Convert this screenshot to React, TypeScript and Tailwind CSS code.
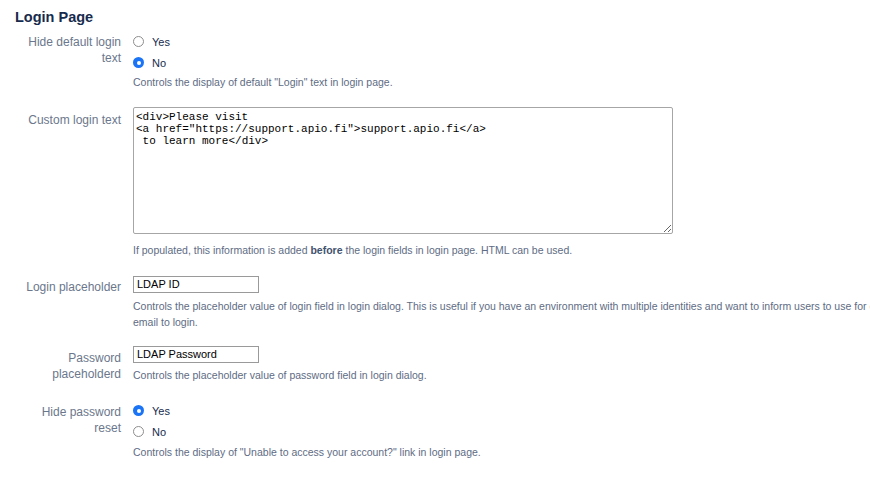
import React from "react";

const font = { fontFamily: '"Liberation Sans", Arial, sans-serif' };

function Radio({ checked, label }: { checked: boolean; label: string }) {
  return (
    <div className="flex h-[21px] items-center">
      {checked ? (
        <span className="flex h-[11px] w-[11px] items-center justify-center rounded-full bg-[#1b74f5]">
          <span className="h-[4px] w-[4px] rounded-full bg-white" />
        </span>
      ) : (
        <span className="h-[11px] w-[11px] rounded-full border border-[#8d8d8d] bg-white" />
      )}
      <span className="ml-[8px] text-[11px] leading-[16px] text-[#172b4d]">{label}</span>
    </div>
  );
}

function Label({ lines, pt }: { lines: string[]; pt: string }) {
  return (
    <div className={`w-[106px] shrink-0 text-right text-[12px] leading-[16px] text-[#6b778c] ${pt}`}>
      {lines.map((l, i) => (
        <div key={i} className="whitespace-nowrap">{l}</div>
      ))}
    </div>
  );
}

function Desc({ children, className = "" }: { children: React.ReactNode; className?: string }) {
  return (
    <div className={`whitespace-nowrap text-[10.5px] leading-[16px] text-[#5e6c84] ${className}`}>
      {children}
    </div>
  );
}

export default function App() {
  return (
    <div className="h-[495px] w-[870px] overflow-hidden bg-white pl-[15px] pt-[7px]" style={font}>
      <h2 className="h-[20px] text-[14.5px] font-bold leading-[20px] text-[#172b4d]">Login Page</h2>

      {/* Hide default login text */}
      <div className="mt-[4px] flex">
        <Label lines={["Hide default login", "text"]} pt="pt-[3px]" />
        <div className="ml-[12px] flex flex-col">
          <Radio checked={false} label="Yes" />
          <Radio checked={true} label="No" />
          <Desc className="mt-[1px]">Controls the display of default "Login" text in login page.</Desc>
        </div>
      </div>

      {/* Custom login text */}
      <div className="mt-[17px] flex">
        <Label lines={["Custom login text"]} pt="pt-[5px]" />
        <div className="ml-[12px] flex flex-col">
          <textarea
            className="block h-[127px] w-[540px] rounded-[2px] border border-[#a6a6a6] bg-white px-[2px] pt-[3px] text-[11px] leading-[12px] text-black outline-none"
            style={{ fontFamily: '"Liberation Mono", "Courier New", monospace' }}
            defaultValue={'<div>Please visit\n<a href="https://support.apio.fi">support.apio.fi</a>\n to learn more</div>'}
          />
          <Desc className="mt-[8px]">
            If populated, this information is added <b className="font-bold text-[#42526e]">before</b> the login fields in login page. HTML can be used.
          </Desc>
        </div>
      </div>

      {/* Login placeholder */}
      <div className="mt-[18px] flex">
        <Label lines={["Login placeholder"]} pt="pt-[3px]" />
        <div className="ml-[12px] flex flex-col">
          <div className="flex h-[17px] w-[126px] items-center border border-[#9a9a9a] bg-white pl-[3px] text-[11px] text-black">
            LDAP ID
          </div>
          <Desc className="mt-[5px]">
            Controls the placeholder value of login field in login dialog. This is useful if you have an environment with multiple identities and want to inform users to use for example their
            <br />
            email to login.
          </Desc>
        </div>
      </div>

      {/* Password placeholder */}
      <div className="mt-[16px] flex">
        <Label lines={["Password", "placeholderd"]} pt="pt-[4px]" />
        <div className="ml-[12px] flex flex-col">
          <div className="flex h-[17px] w-[126px] items-center border border-[#9a9a9a] bg-white pl-[3px] text-[11px] text-black">
            LDAP Password
          </div>
          <Desc className="mt-[4px]">Controls the placeholder value of password field in login dialog.</Desc>
        </div>
      </div>

      {/* Hide password reset */}
      <div className="mt-[17px] flex">
        <Label lines={["Hide password", "reset"]} pt="pt-[4px]" />
        <div className="ml-[12px] flex flex-col">
          <Radio checked={true} label="Yes" />
          <Radio checked={false} label="No" />
          <Desc className="mt-[2px]">Controls the display of "Unable to access your account?" link in login page.</Desc>
        </div>
      </div>
    </div>
  );
}
